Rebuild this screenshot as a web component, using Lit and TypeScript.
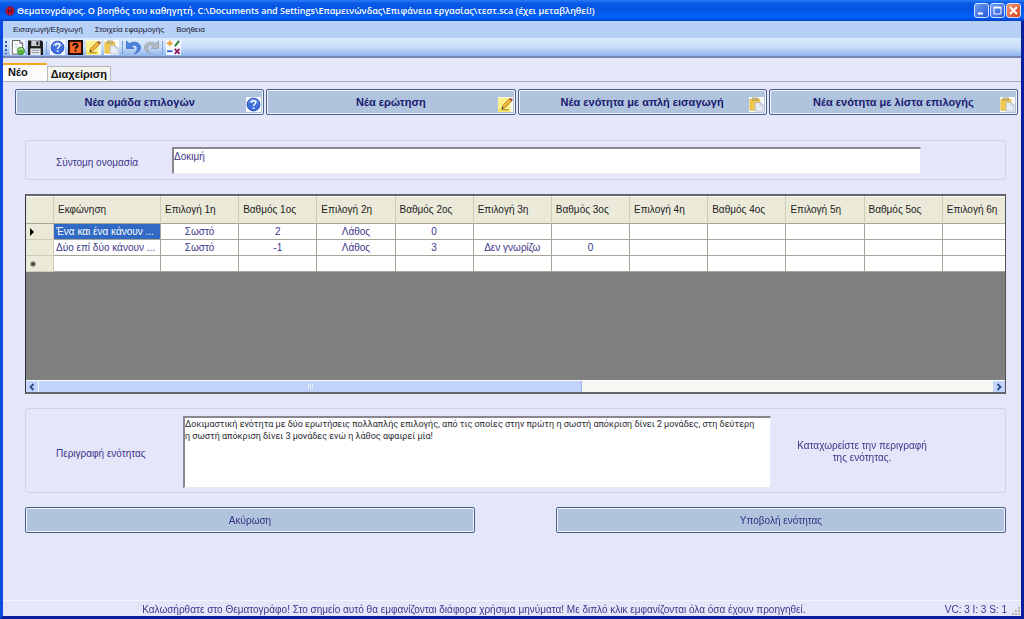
import { LitElement, html, css, svg, nothing } from "lit";
import { customElement, property, state } from "lit/decorators.js";
import { classMap } from "lit/directives/class-map.js";

const icons: Record<string, unknown> = {
  app: svg`<circle cx="8" cy="8" r="7.5" fill="#8a1538"/><circle cx="8" cy="8" r="5.6" fill="#c4122c"/><path d="M5.500 4.500v7M10.500 4.500v7M5.500 8h5" stroke="#4a1030" stroke-width="1.600" fill="none"/>`,
  page: svg`<path d="M0 0h16v16H0z" fill="#f2f7ff"/><path d="M2.500 .5h8l3 3v11.500h-11z" fill="#fff" stroke="#555a5c"/><path d="M10.500 .5v3h3" fill="#dde" stroke="#555a5c"/><path d="M4.500 5h4M4.500 7.500h5" stroke="#c9d3dc"/><circle cx="11.700" cy="11.700" r="3.900" fill="#5cb548" stroke="#2b7a22" stroke-width=".7"/><path d="M9.300 11a2.600 2.600 0 0 1 4.500-.8" stroke="#c8f2b8" stroke-width="1.200" fill="none"/>`,
  save: svg`<path d="M0 .5h14.500L16 2v14H0z" fill="#1c1c1c"/><path d="M3.500 .5h9v6h-9z" fill="#c9ced6"/><path d="M9 1.500h2v4H9z" fill="#1c1c1c"/><path d="M2.500 9h11v7h-11z" fill="#e9ebee"/><path d="M4 11h8M4 13.500h8" stroke="#8a8f96"/>`,
  help: svg`<path d="M0 0h16v16H0z" fill="#f4f7ff"/><circle cx="8" cy="8" r="6.800" fill="#3f6fdf" stroke="#2249b5"/><path d="M3.300 6A5.200 5.200 0 0 1 12.700 6" stroke="#8fb2f5" stroke-width="1.300" fill="none"/><path d="M5.900 6.300c0-3 4.400-3 4.400-.3 0 1.700-2.200 1.700-2.200 3.500" stroke="#fff" stroke-width="1.600" fill="none"/><circle cx="8.100" cy="11.800" r="1" fill="#fff"/>`,
  quiz: svg`<path d="M0 0h16v16H0z" fill="#1a0a06"/><path d="M2 2h12v12H2z" fill="#f0561c"/><path d="M3 3h10v10H3z" fill="#ff6a22"/><path d="M5.600 6.300c0-3 4.800-3 4.800-.3 0 1.700-2.400 1.500-2.400 3.200" stroke="#1a0a06" stroke-width="1.900" fill="none"/><path d="M7 10.300h2v2H7z" fill="#1a0a06"/>`,
  note: svg`<path d="M0 0h16v16H0z" fill="#fdfbe6"/><path d="M0 1h13v14.500H0z" fill="#fbf08a"/><path d="M0 13h12l1 2.500H0z" fill="#f3dc54"/><path d="M4 12.500l1-3.500 7-7 2.600 2.400-7 7z" fill="#f0b83a" stroke="#9a6a1c" stroke-width=".7"/><path d="M12 2l1.500-1.300L16 3l-1.400 1.400z" fill="#9c4a5c"/><path d="M4 12.500l.6-2 1.500 1.400z" fill="#222"/><path d="M4 13.500h7" stroke="#a8842a"/>`,
  paste: svg`<path d="M0 0h16v16H0z" fill="#fafaf6"/><path d="M1 2.500h10.500V14H1z" fill="#f2ca4c" stroke="#d9b040" stroke-width=".8"/><path d="M3.500 1h5.500v2.500H3.500z" fill="#d3bf84" stroke="#a08c50" stroke-width=".7"/><path d="M6.500 6H12l3 2.500V15H6.500z" fill="#e6ecf7" stroke="#b0b9c9" stroke-width=".8"/><path d="M12 6v2.700h3" stroke="#b0b9c9" fill="none" stroke-width=".8"/>`,
  undo: svg`<path d="M.5 1v8h8L5.800 6.300C8.500 4.500 12 5.800 12 9c0 2.200-1 3.800-3 5.800C13 13.500 15.800 10.500 15.500 7.500 15 3 8.500.4 3.400 4z" fill="#4a86e0" stroke="#2a5cb8" stroke-width=".7"/>`,
  redo: svg`<path d="M15.500 1v8h-8l2.700-2.700C7.500 4.500 4 5.800 4 9c0 2.200 1 3.800 3 5.800C3 13.500 .2 10.500.5 7.500 1 3 7.500.4 12.600 4z" fill="#b3bac2" stroke="#8e979f" stroke-width=".7"/>`,
  ops: svg`<path d="M0 0h16v16H0z" fill="#f6f8ff"/><path d="M1 3.500h6M4 .5v6" stroke="#f09a1c" stroke-width="1.800"/><path d="M14 1l-4.500 5.500" stroke="#1f7a2c" stroke-width="1.900"/><path d="M1 12h6" stroke="#2a5fd0" stroke-width="1.900"/><path d="M9.300 9.500l5.200 5.300M14.500 9.500l-5.200 5.300" stroke="#8a1560" stroke-width="1.900"/>`,
};

@customElement("ui-icon")
class UiIcon extends LitElement {
  @property() name = "";
  static styles = css`
    :host { display: block; flex: none; width: 15px; height: 15px; }
    svg { display: block; width: 100%; height: 100%; }
  `;
  render() {
    return html`<svg viewBox="0 0 16 16" aria-hidden="true">${icons[this.name] ?? nothing}</svg>`;
  }
}

const COLUMNS = [
  "Επιλογή 1η", "Βαθμός 1ος", "Επιλογή 2η", "Βαθμός 2ος", "Επιλογή 3η", "Βαθμός 3ος",
  "Επιλογή 4η", "Βαθμός 4ος", "Επιλογή 5η", "Βαθμός 5ος", "Επιλογή 6η",
];

@customElement("question-grid")
class QuestionGrid extends LitElement {
  @property({ attribute: false }) rows: string[][] = [];
  @property({ type: Number }) visiblePart = 57;
  static styles = css`
    :host { display: flex; flex-direction: column; border: 2px solid #65656d; border-left: 1px solid #303038; border-right: 1px solid #505058; background: #808080; box-sizing: border-box; overflow: hidden; }
    .view { flex: 1; overflow: hidden; }
    table { width: calc(100% + 16px); table-layout: fixed; border-collapse: separate; border-spacing: 0; font-size: 10px; color: #3a3688; }
    .mark { width: 28px; }
    .prompt { width: 107px; }
    th, td { box-sizing: border-box; padding: 0 3px; border-right: 1px solid #a5a598; border-bottom: 1px solid #a5a598; white-space: nowrap; overflow: hidden; }
    th { background: #ebead9; color: #222; font-weight: normal; text-align: left; }
    thead th { height: 28px; border-right-color: #cfccb8; padding: 0 4px; box-shadow: inset 0 1px #fff; }
    tbody th { border-color: #cfccb8; }
    td { height: 16px; background: #fff; text-align: center; line-height: 15px; }
    td.first { text-align: left; padding: 0 2px; }
    td.picked { background: #316ac5; color: #fff; }
    .glyph { display: block; width: 8px; height: 8px; }
    .bar { display: flex; height: 12px; background: #f8f6f2; border-top: 1px solid #fff; box-sizing: border-box; }
    .track { flex: 1; display: flex; }
    .arrow { width: 12px; padding: 0; border: 0; background: #c3d5fd; display: grid; place-items: center; }
    .arrow svg { width: 8px; height: 8px; }
    .thumb { display: flex; justify-content: center; align-items: center; gap: 1px; background: #c1d3fb; border-left: 1px solid #fff; border-right: 1px solid #98b1e4; box-sizing: border-box; }
    .thumb i { width: 1px; height: 5px; background: #e6eefe; }
  `;
  render() {
    const cells = COLUMNS.length + 1;
    const all = [...this.rows, []];
    return html`
      <div class="view">
        <table>
          <colgroup><col class="mark"><col class="prompt">${COLUMNS.map(() => html`<col>`)}</colgroup>
          <thead><tr><th></th><th scope="col">Εκφώνηση</th>${COLUMNS.map((c) => html`<th scope="col">${c}</th>`)}</tr></thead>
          <tbody>
            ${all.map((row, r) => html`<tr>
              <th>${r === 0
                ? html`<svg class="glyph" viewBox="0 0 8 8"><path d="M1 0l4 4-4 4z" fill="#000"/></svg>`
                : r === all.length - 1
                  ? html`<svg class="glyph" viewBox="0 0 8 8"><path d="M4 1v6M1 4h6M2 2l4 4M6 2l-4 4" stroke="#222" stroke-width=".9"/></svg>`
                  : nothing}</th>
              ${Array.from({ length: cells }, (_, c) => html`<td class=${classMap({ first: c === 0, picked: c === 0 && r === 0 })}>${row[c] ?? ""}</td>`)}
            </tr>`)}
          </tbody>
        </table>
      </div>
      <div class="bar">
        <button class="arrow" aria-label="Αριστερά"><svg viewBox="0 0 8 8"><path d="M5.500 1l-3 3 3 3" fill="none" stroke="#2c4a86" stroke-width="1.800"/></svg></button>
        <div class="track"><div class="thumb" style="width:${this.visiblePart}%"><i></i><i></i><i></i></div></div>
        <button class="arrow" aria-label="Δεξιά"><svg viewBox="0 0 8 8"><path d="M2.500 1l3 3-3 3" fill="none" stroke="#2c4a86" stroke-width="1.800"/></svg></button>
      </div>`;
  }
}

@customElement("app-root")
class AppRoot extends LitElement {
  @state() private tab = 0;

  static styles = css`
    :host { display: flex; flex-direction: column; min-height: 100vh; box-sizing: border-box; font-family: "Liberation Sans", Arial, sans-serif; font-size: 10px; color: #3a3688; background: #e6e6fa; border: solid; border-width: 0 3px 3px 3px; border-color: #0b4be0 #0a1fa0 #0a1fa0 #0b4be0; }
    button, input, textarea { font: inherit; color: inherit; border-radius: 0; }
    .title { display: flex; align-items: center; gap: 2px; height: 21px; margin: 0 -3px; padding: 0 3px 0 5px; box-sizing: border-box; background: linear-gradient(#2a7cf5 0, #0a5ce8 3px, #0353e4 9px, #0562fa 17px, #0040c8 21px); }
    .title ui-icon { width: 10px; height: 10px; }
    .caption { flex: 1; margin: 0; color: #fff; font: 600 9px "Open Sans", sans-serif; white-space: nowrap; }
    .window-buttons { display: flex; gap: 1px; }
    .wb { width: 15px; height: 15px; padding: 0; border: 1px solid #d5e2fb; border-radius: 3px; background: linear-gradient(135deg, #6f9cf4, #2458dc); }
    .wb.close { background: linear-gradient(135deg, #f09a7c, #d5401a); }
    .wb svg { display: block; width: 13px; height: 13px; }
    .menu { display: flex; gap: 12px; height: 17px; padding-left: 10px; background: #b7d0f8; color: #14142c; }
    .menu button { padding: 0; border: 0; background: none; font-size: 8px; }
    .tools { display: flex; align-items: center; gap: 3px; height: 20px; padding-left: 2px; box-sizing: border-box; background: linear-gradient(#dcebfe, #c9defb 50%, #8fb4ec); border-bottom: 2px solid #7387b0; }
    .tools button { padding: 0; border: 0; background: none; }
    .grip { width: 2px; height: 13px; background: repeating-linear-gradient(#3a5a9c 0 2px, transparent 2px 4px); }
    .sep { width: 1px; height: 13px; background: #7f9fd4; }
    .tabs { display: flex; align-items: flex-end; height: 24px; box-sizing: border-box; border-bottom: 1px solid #adadbd; }
    .tabs button { height: 15px; padding: 0 3px; border: 1px solid #b5b9b6; border-bottom: 0; background: #f4f4ee; color: #111; font-weight: bold; font-size: 11px; line-height: 14px; }
    .tabs button.on { height: 18px; padding: 0 19px 3px 5px; border: 0; border-top: 2px solid #f5a623; background: #fcfcfd; }
    main { display: flex; flex-direction: column; flex: 1; padding: 7px 3px 0 12px; }
    .actions { display: grid; grid-template-columns: repeat(4, 1fr); gap: 2px; }
    .btn { display: grid; height: 26px; padding: 0; border: 1px solid #49618a; border-radius: 2px; background: #b0c4de; box-shadow: inset 0 0 0 1px #f1f5fb; place-items: center; color: #342f80; }
    .actions .btn { color: #191970; font-weight: bold; font-size: 11px; }
    .btn > * { grid-area: 1 / 1; }
    .btn ui-icon { place-self: end; margin: 0 2px 2px 0; }
    .form { display: flex; flex-direction: column; flex: 1; gap: 14px; padding: 25px 12px 0 10px; }
    .group { display: grid; align-items: center; border: 1px solid #d2d2de; border-radius: 3px; padding-left: 30px; box-sizing: border-box; }
    .name { grid-template-columns: 116px 1fr; padding-right: 84px; height: 40px; }
    .group label { padding-top: 4px; }
    .about { grid-template-columns: 127px 588fr 182fr; padding-right: 52px; height: 85px; padding-top: 2px; }
    .field { width: 100%; box-sizing: border-box; margin: 0; border: 1px solid #e9e9f2; border-top: 2px solid #8b8790; border-left: 2px solid #8b8790; background: #fff; outline: 0; }
    .name .field { height: 27px; padding: 0 0 9px; }
    .about .field { height: 72px; padding: 0 12px 0 0; resize: none; color: #2a2a32; font: 9px/12px Roboto, sans-serif; overflow: hidden; }
    .hint { margin: 0; text-align: center; line-height: 12px; padding: 0 20px; }
    question-grid { height: 200px; }
    .answer { display: grid; grid-template-columns: 1fr 1fr; gap: 81px; }
    .status { display: flex; align-items: center; height: 16px; padding-top: 2px; box-sizing: border-box; border-top: 1px solid #f4f4fc; white-space: nowrap; }
    .message { flex: 1; text-align: center; }
    .corner { width: 10px; height: 10px; align-self: end; margin-left: 4px; }
  `;

  firstUpdated() {
    const area = this.renderRoot.querySelector("textarea")!;
    area.focus();
    area.setSelectionRange(area.value.length, area.value.length);
  }

  private tool(name: string, label: string) {
    return html`<button aria-label=${label}><ui-icon name=${name}></ui-icon></button>`;
  }

  render() {
    const rows = [
      ["Ένα και ένα κάνουν ...", "Σωστό", "2", "Λάθος", "0"],
      ["Δύο επί δύο κάνουν ...", "Σωστό", "-1", "Λάθος", "3", "Δεν γνωρίζω", "0"],
    ];
    const actions = [
      ["Νέα ομάδα επιλογών", "help"],
      ["Νέα ερώτηση", "note"],
      ["Νέα ενότητα με απλή εισαγωγή", "paste"],
      ["Νέα ενότητα με λίστα επιλογής", "paste"],
    ];
    return html`
      <header class="title">
        <ui-icon name="app"></ui-icon>
        <h1 class="caption">Θεματογράφος. Ο βοηθός του καθηγητή. C:\\Documents and Settings\\Επαμεινώνδας\\Επιφάνεια εργασίας\\τεστ.sca (έχει μεταβληθεί!)</h1>
        <div class="window-buttons">
          <button class="wb" aria-label="Ελαχιστοποίηση"><svg viewBox="0 0 13 13"><path d="M3 9.500h5" stroke="#fff" stroke-width="2"/></svg></button>
          <button class="wb" aria-label="Μεγιστοποίηση"><svg viewBox="0 0 13 13"><path d="M3 3.500h7v6.500h-7z" stroke="#fff" fill="none"/><path d="M2.500 3.500h8" stroke="#fff" stroke-width="2"/></svg></button>
          <button class="wb close" aria-label="Κλείσιμο"><svg viewBox="0 0 13 13"><path d="M3 3l7 7M10 3l-7 7" stroke="#fff" stroke-width="1.800"/></svg></button>
        </div>
      </header>
      <nav class="menu"><button>Εισαγωγή/Εξαγωγή</button><button>Στοιχεία εφαρμογής</button><button>Βοήθεια</button></nav>
      <div class="tools">
        <span class="grip"></span>
        ${this.tool("page", "Νέο")}${this.tool("save", "Αποθήκευση")}
        <span class="sep"></span>
        ${this.tool("help", "Ομάδα επιλογών")}${this.tool("quiz", "Ερωτήσεις")}${this.tool("note", "Ερώτηση")}${this.tool("paste", "Ενότητα")}
        <span class="sep"></span>
        ${this.tool("undo", "Αναίρεση")}${this.tool("redo", "Επανάληψη")}
        <span class="sep"></span>
        ${this.tool("ops", "Πράξεις")}
      </div>
      <div class="tabs" role="tablist">
        ${["Νέο", "Διαχείριση"].map((t, i) => html`<button role="tab" class=${classMap({ on: this.tab === i })} @click=${() => (this.tab = i)}>${t}</button>`)}
      </div>
      <main>
        <div class="actions">
          ${actions.map(([text, icon]) => html`<button class="btn"><span>${text}</span><ui-icon name=${icon}></ui-icon></button>`)}
        </div>
        <div class="form">
          <div class="group name">
            <label for="short">Σύντομη ονομασία</label>
            <input id="short" class="field" .value=${"Δοκιμή"}>
          </div>
          <question-grid .rows=${rows}></question-grid>
          <div class="group about">
            <label for="about">Περιγραφή ενότητας</label>
            <textarea id="about" class="field" spellcheck="false" .value=${"Δοκιμαστική ενότητα με δύο ερωτήσεις πολλαπλής επιλογής, από τις οποίες στην πρώτη η σωστή απόκριση δίνει 2 μονάδες, στη δεύτερη η σωστή απόκριση δίνει 3 μονάδες ενώ η λάθος αφαιρεί μία!"}></textarea>
            <p class="hint">Καταχωρείστε την περιγραφή της ενότητας.</p>
          </div>
          <div class="answer">
            <button class="btn"><span>Ακύρωση</span></button>
            <button class="btn"><span>Υποβολή ενότητας</span></button>
          </div>
        </div>
      </main>
      <footer class="status">
        <span class="message">Καλωσήρθατε στο Θεματογράφο! Στο σημείο αυτό θα εμφανίζονται διάφορα χρήσιμα μηνύματα! Με διπλό κλικ εμφανίζονται όλα όσα έχουν προηγηθεί.</span>
        <span>VC: 3 I: 3 S: 1</span>
        <svg class="corner" viewBox="0 0 10 10"><path d="M7 1h2v2H7zM4 4h2v2H4zM7 4h2v2H7zM1 7h2v2H1zM4 7h2v2H4zM7 7h2v2H7z" fill="#b9b7b0"/></svg>
      </footer>`;
  }
}
